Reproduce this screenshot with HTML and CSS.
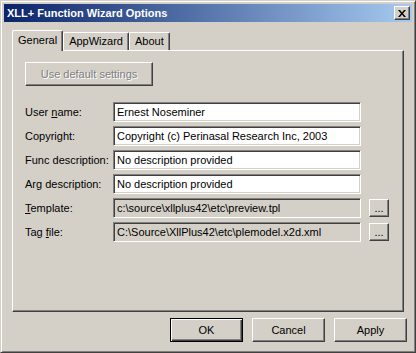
FILE: index.html
```html
<!DOCTYPE html>
<html>
<head>
    <title>XLL+ Function Wizard Options</title>
    <meta charset="UTF-8">
    <link rel="stylesheet" href="styles.css">
</head>
<body>
    <div class="window">
        <div class="titlebar">
            <span class="title">XLL+ Function Wizard Options</span>
            <button class="close">
                <svg width="8" height="7" viewBox="0 0 8 7">
                    <path d="M0 0h2l2 2.5 2-2.5h2l-3 3.5 3 3.5h-2l-2-2.5-2 2.5h-2l3-3.5z" fill="#000"/>
                </svg>
            </button>
        </div>

        <div class="tabs">
            <div class="tab selected">General</div>
            <div class="tab">AppWizard</div>
            <div class="tab">About</div>
        </div>

        <div class="panel">
            <button class="btn disabled wide">Use default settings</button>

            <div class="form">
                <label>User <u>n</u>ame:</label>
                <input type="text" class="field" value="Ernest Noseminer">
                <span></span>

                <label>Copyright:</label>
                <input type="text" class="field" value="Copyright (c) Perinasal Research Inc, 2003">
                <span></span>

                <label>Func description:</label>
                <input type="text" class="field" value="No description provided">
                <span></span>

                <label>Arg description:</label>
                <input type="text" class="field" value="No description provided">
                <span></span>

                <label><u>T</u>emplate:</label>
                <input type="text" class="field readonly" value="c:\source\xllplus42\etc\preview.tpl" readonly>
                <button class="btn browse">...</button>

                <label>Tag <u>f</u>ile:</label>
                <input type="text" class="field readonly" value="C:\Source\XllPlus42\etc\plemodel.x2d.xml" readonly>
                <button class="btn browse">...</button>
            </div>
        </div>

        <div class="actions">
            <button class="btn action default">OK</button>
            <button class="btn action">Cancel</button>
            <button class="btn action">Apply</button>
        </div>
    </div>
</body>
</html>
```

FILE: styles.css
```css
body {
    margin: 0;
    padding: 0;
    background-color: #d4d0c8;
    font-family: "Liberation Sans", Arial, sans-serif;
    font-size: 11px;
    color: #000;
}

.window {
    width: 416px;
    height: 353px;
    box-sizing: border-box;
    border: 1px solid;
    border-color: #d4d0c8 #404040 #404040 #d4d0c8;
    box-shadow: inset 1px 1px #fff, inset -1px -1px #808080;
    padding: 3px;
    background-color: #d4d0c8;
    display: flex;
    flex-direction: column;
}

/* barra de titulo */
.titlebar {
    height: 18px;
    background: linear-gradient(to right, #0a246a, #a6caf0);
    display: flex;
    align-items: center;
    justify-content: space-between;
    padding: 0 2px 0 3px;
}

.title {
    color: #fff;
    font-weight: bold;
    font-size: 11px;
}

.close {
    width: 16px;
    height: 14px;
    padding: 0;
    background-color: #d4d0c8;
    border: 1px solid;
    border-color: #fff #404040 #404040 #fff;
    box-shadow: inset -1px -1px #808080;
    display: flex;
    align-items: center;
    justify-content: center;
}

/* pestañas */
.tabs {
    display: flex;
    align-items: flex-end;
    margin: 8px 0 0 8px;
    height: 20px;
}

.tab {
    height: 17px;
    padding: 0 5px;
    border: 1px solid;
    border-bottom: none;
    border-color: #fff #404040 #404040 #fff;
    box-shadow: inset -1px 0 #808080;
    border-radius: 2px 2px 0 0;
    line-height: 17px;
}

.tab.selected {
    height: 20px;
    line-height: 19px;
    padding: 0 5px;
    position: relative;
    z-index: 1;
    margin-bottom: -1px;
    background-color: #d4d0c8;
}

.panel {
    width: 392px;
    height: 262px;
    box-sizing: border-box;
    margin-left: 8px;
    border: 1px solid;
    border-color: #fff #404040 #404040 #fff;
    box-shadow: inset -1px -1px #808080;
    padding: 11px 12px;
}

/* botones */
.btn {
    font-family: "Liberation Sans", Arial, sans-serif;
    font-size: 11px;
    background-color: #d4d0c8;
    color: #000;
    border: 1px solid;
    border-color: #fff #404040 #404040 #fff;
    box-shadow: inset -1px -1px #808080;
    padding: 0;
}

.btn.disabled {
    color: #808080;
    text-shadow: 1px 1px #fff;
}

.wide {
    width: 128px;
    height: 24px;
}

.form {
    display: grid;
    grid-template-columns: 80px 248px 20px;
    column-gap: 8px;
    row-gap: 4px;
    align-items: center;
    margin-top: 16px;
}

label {
    white-space: nowrap;
}

label u {
    text-decoration-thickness: 1px;
}

.field {
    height: 20px;
    box-sizing: border-box;
    border: 1px solid;
    border-color: #808080 #fff #fff #808080;
    box-shadow: inset 1px 1px #404040, inset -1px -1px #d4d0c8;
    padding: 0 3px;
    font-family: "Liberation Sans", Arial, sans-serif;
    font-size: 11px;
    background-color: #fff;
    outline: none;
}

.field.readonly {
    background-color: #d4d0c8;
}

.browse {
    width: 20px;
    height: 18px;
    line-height: 10px;
}

.actions {
    display: flex;
    justify-content: flex-end;
    gap: 9px;
    margin: 6px 5px 0 0;
}

.action {
    width: 73px;
    height: 24px;
}

.action.default {
    border: 1px solid #000;
    box-shadow: inset 1px 1px #fff, inset -1px -1px #404040, inset -2px -2px #808080;
}
```
